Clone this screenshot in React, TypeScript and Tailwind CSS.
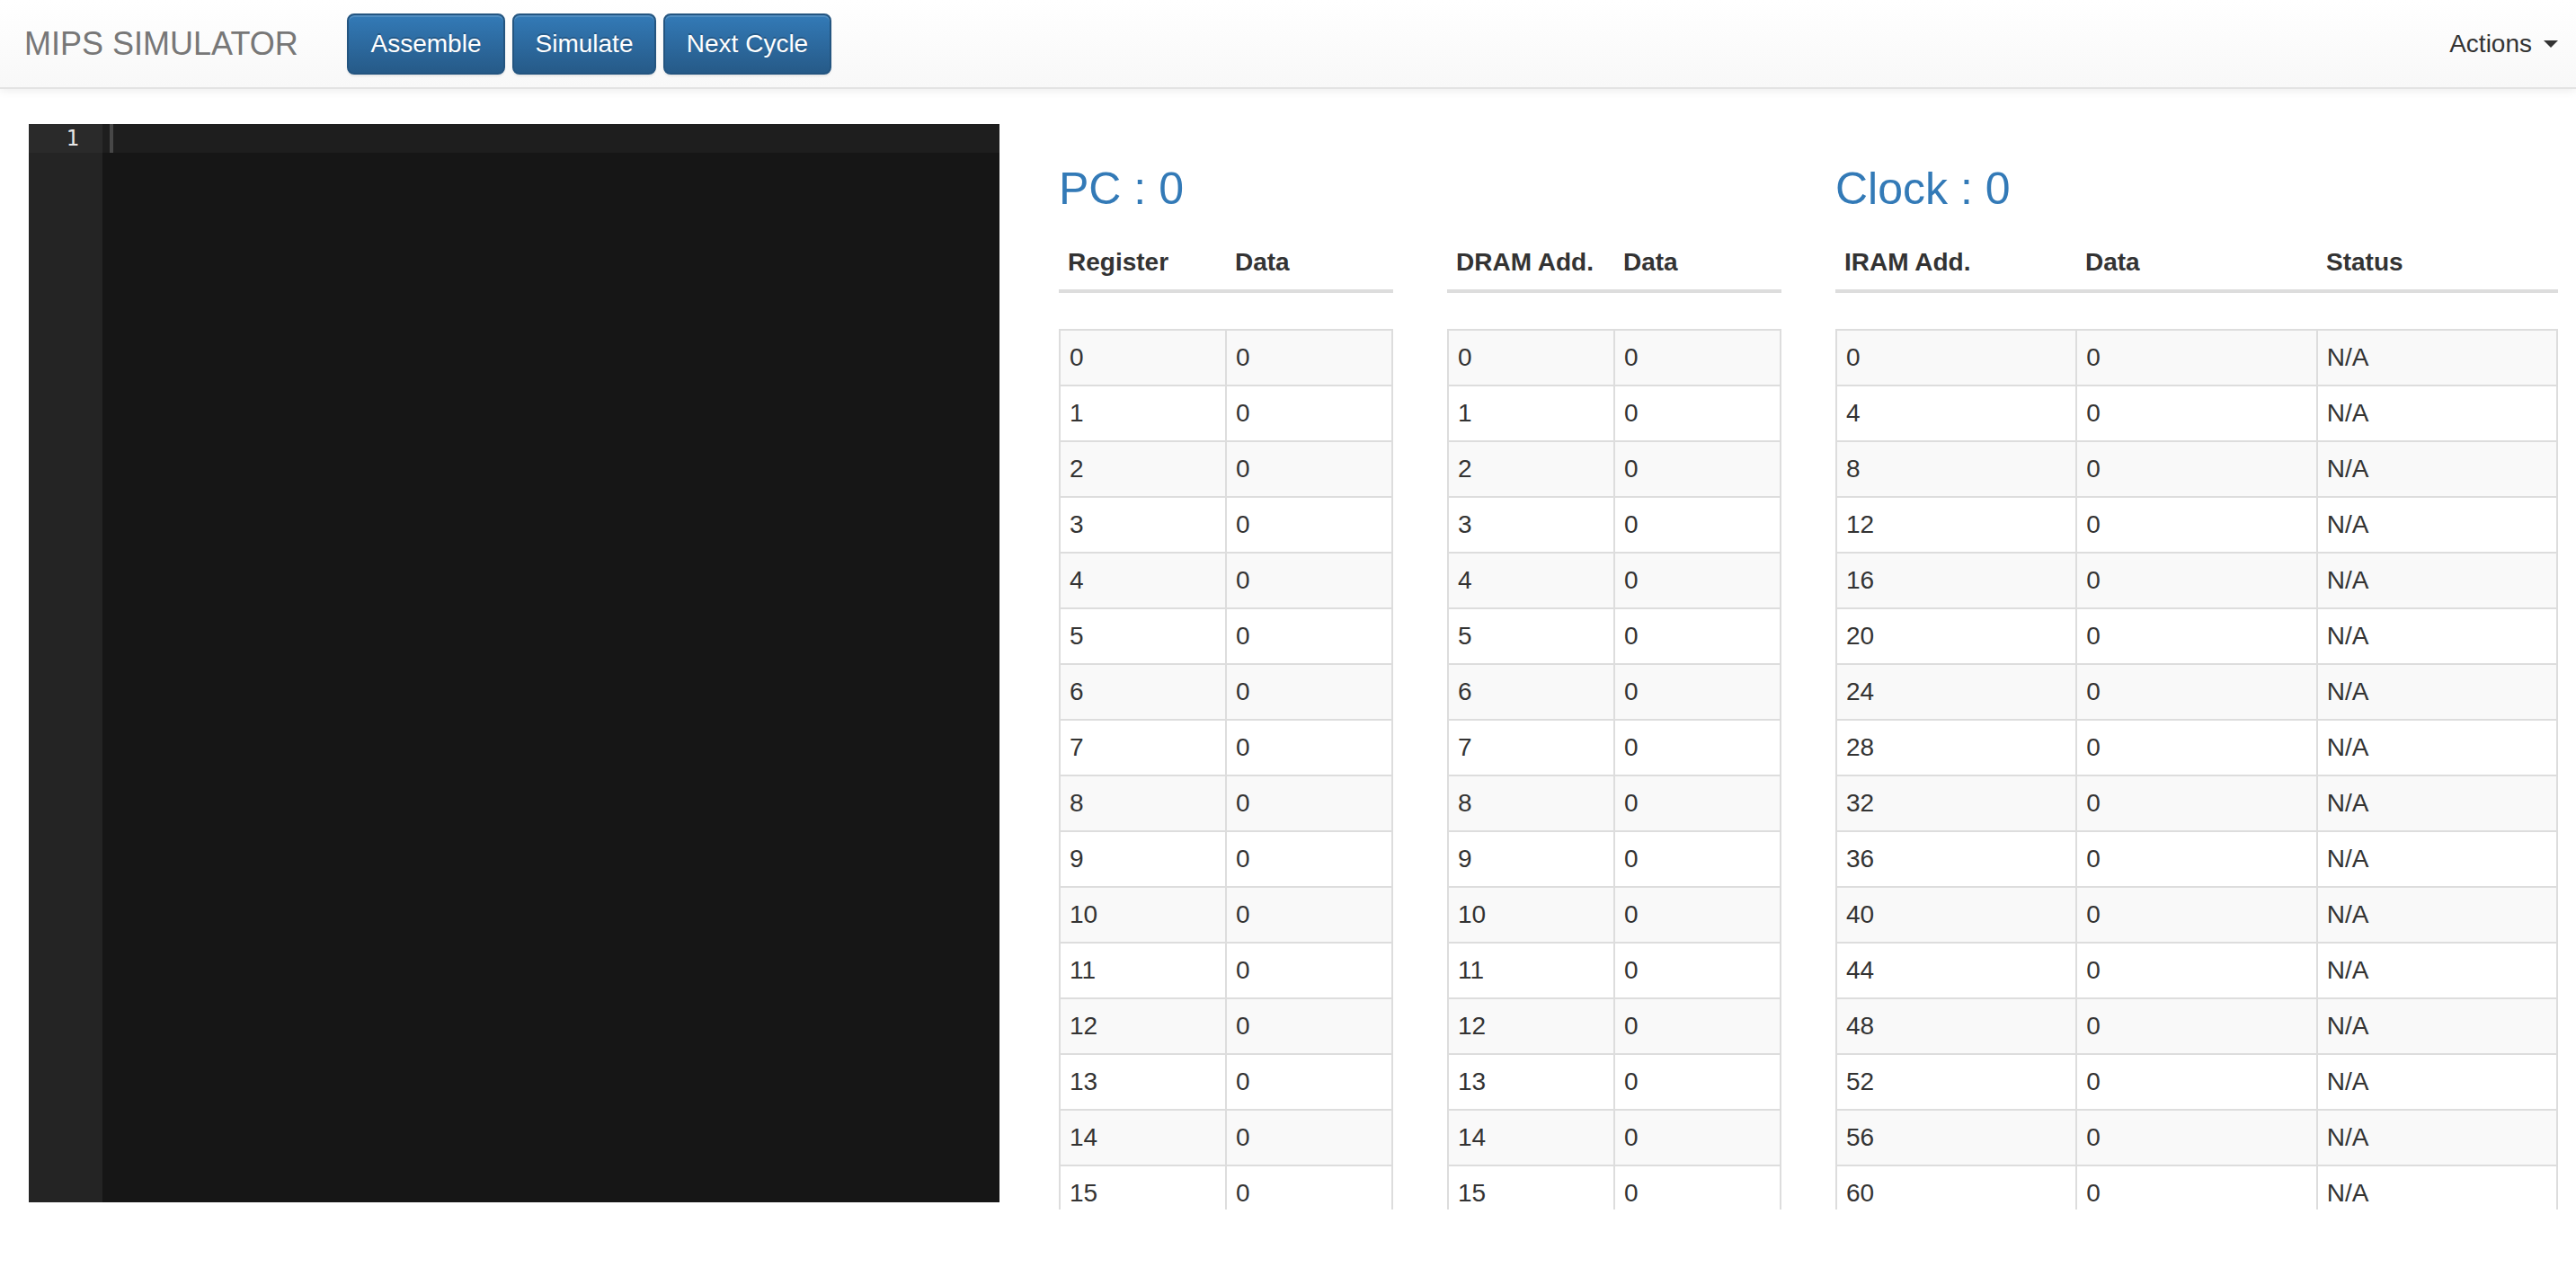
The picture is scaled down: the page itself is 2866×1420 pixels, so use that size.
import React from 'react'

const registers = Array.from({ length: 16 }, (_, i) => [String(i), '0'])
const dram = Array.from({ length: 16 }, (_, i) => [String(i), '0'])
const iram = Array.from({ length: 16 }, (_, i) => [String(i * 4), '0', 'N/A'])

function NavButton({ width, children }: { width: string; children: React.ReactNode }) {
  return (
    <button
      className={`${width} h-[68px] rounded-[8px] border-2 border-[#245580] bg-gradient-to-b from-[#337ab7] to-[#265a88] text-[28px] leading-[40px] text-white shadow-[inset_0_2px_0_rgba(255,255,255,0.15),0_2px_2px_rgba(0,0,0,0.075)] [text-shadow:0_-2px_0_rgba(0,0,0,0.2)]`}
    >
      {children}
    </button>
  )
}

function HeadTable({ cols }: { cols: string[] }) {
  return (
    <table className="w-full table-fixed border-collapse">
      <thead>
        <tr>
          {cols.map((c, i) => (
            <th
              key={i}
              className="border-b-4 border-[#ddd] px-[10px] py-[10px] text-left text-[28px] font-bold leading-[40px]"
            >
              {c}
            </th>
          ))}
        </tr>
      </thead>
    </table>
  )
}

function BodyTable({ rows }: { rows: string[][] }) {
  return (
    <div className="mt-[40px] h-[980px] overflow-hidden">
      <table className="w-full table-fixed border-collapse">
        <tbody>
          {rows.map((row, i) => (
            <tr key={i} className={i % 2 === 0 ? 'bg-[#f9f9f9]' : 'bg-white'}>
              {row.map((cell, j) => (
                <td
                  key={j}
                  className="border-2 border-[#ddd] px-[10px] py-[10px] text-[28px] leading-[40px]"
                >
                  {cell}
                </td>
              ))}
            </tr>
          ))}
        </tbody>
      </table>
    </div>
  )
}

export default function App() {
  return (
    <div className="min-h-screen bg-white font-['Liberation_Sans',Arial,sans-serif] text-[#333]">
      {/* Navbar */}
      <nav className="flex h-[99px] items-center border-b-2 border-[#e3e3e3] bg-gradient-to-b from-white to-[#f8f8f8] pl-[27px] pr-[20px] shadow-[0_2px_10px_rgba(0,0,0,0.075)]">
        <span className="w-[359px] text-[36px] leading-[40px] text-[#777]">MIPS SIMULATOR</span>
        <div className="flex gap-[8px]">
          <NavButton width="w-[176px]">Assemble</NavButton>
          <NavButton width="w-[160px]">Simulate</NavButton>
          <NavButton width="w-[187px]">Next Cycle</NavButton>
        </div>
        <div className="ml-auto flex items-center text-[28px] leading-[40px] text-[#333]">
          Actions
          <span className="ml-[13px] h-0 w-0 border-x-[8px] border-t-[8px] border-x-transparent border-t-[#333]" />
        </div>
      </nav>

      <div className="flex pt-[39px]">
        {/* Editor */}
        <div className="ml-[32px] flex h-[1200px] w-[1080px] bg-[#161616]">
          <div className="w-[82px] bg-[#242424]">
            <div className="h-[32px] bg-[#2a2a2a] pr-[26px] text-right font-['DejaVu_Sans_Mono',monospace] text-[24px] leading-[32px] text-[#e6e6e6]">
              1
            </div>
          </div>
          <div className="flex-1">
            <div className="h-[32px] bg-[#1e1e1e] pl-[8px]">
              <div className="h-full w-[4px] bg-[#474747]" />
            </div>
          </div>
        </div>

        {/* Right side */}
        <div className="ml-[66px] flex gap-[60px]">
          <div className="w-[804px]">
            <h2 className="mt-[45px] mb-[24px] h-[55px] text-[50px] leading-[55px] font-medium text-[#337ab7]">
              PC : 0
            </h2>
            <div className="grid grid-cols-2 gap-x-[60px]">
              <div>
                <HeadTable cols={['Register', 'Data']} />
                <BodyTable rows={registers} />
              </div>
              <div>
                <HeadTable cols={['DRAM Add.', 'Data']} />
                <BodyTable rows={dram} />
              </div>
            </div>
          </div>
          <div className="w-[804px]">
            <h2 className="mt-[45px] mb-[24px] h-[55px] text-[50px] leading-[55px] font-medium text-[#337ab7]">
              Clock : 0
            </h2>
            <HeadTable cols={['IRAM Add.', 'Data', 'Status']} />
            <BodyTable rows={iram} />
          </div>
        </div>
      </div>
    </div>
  )
}
